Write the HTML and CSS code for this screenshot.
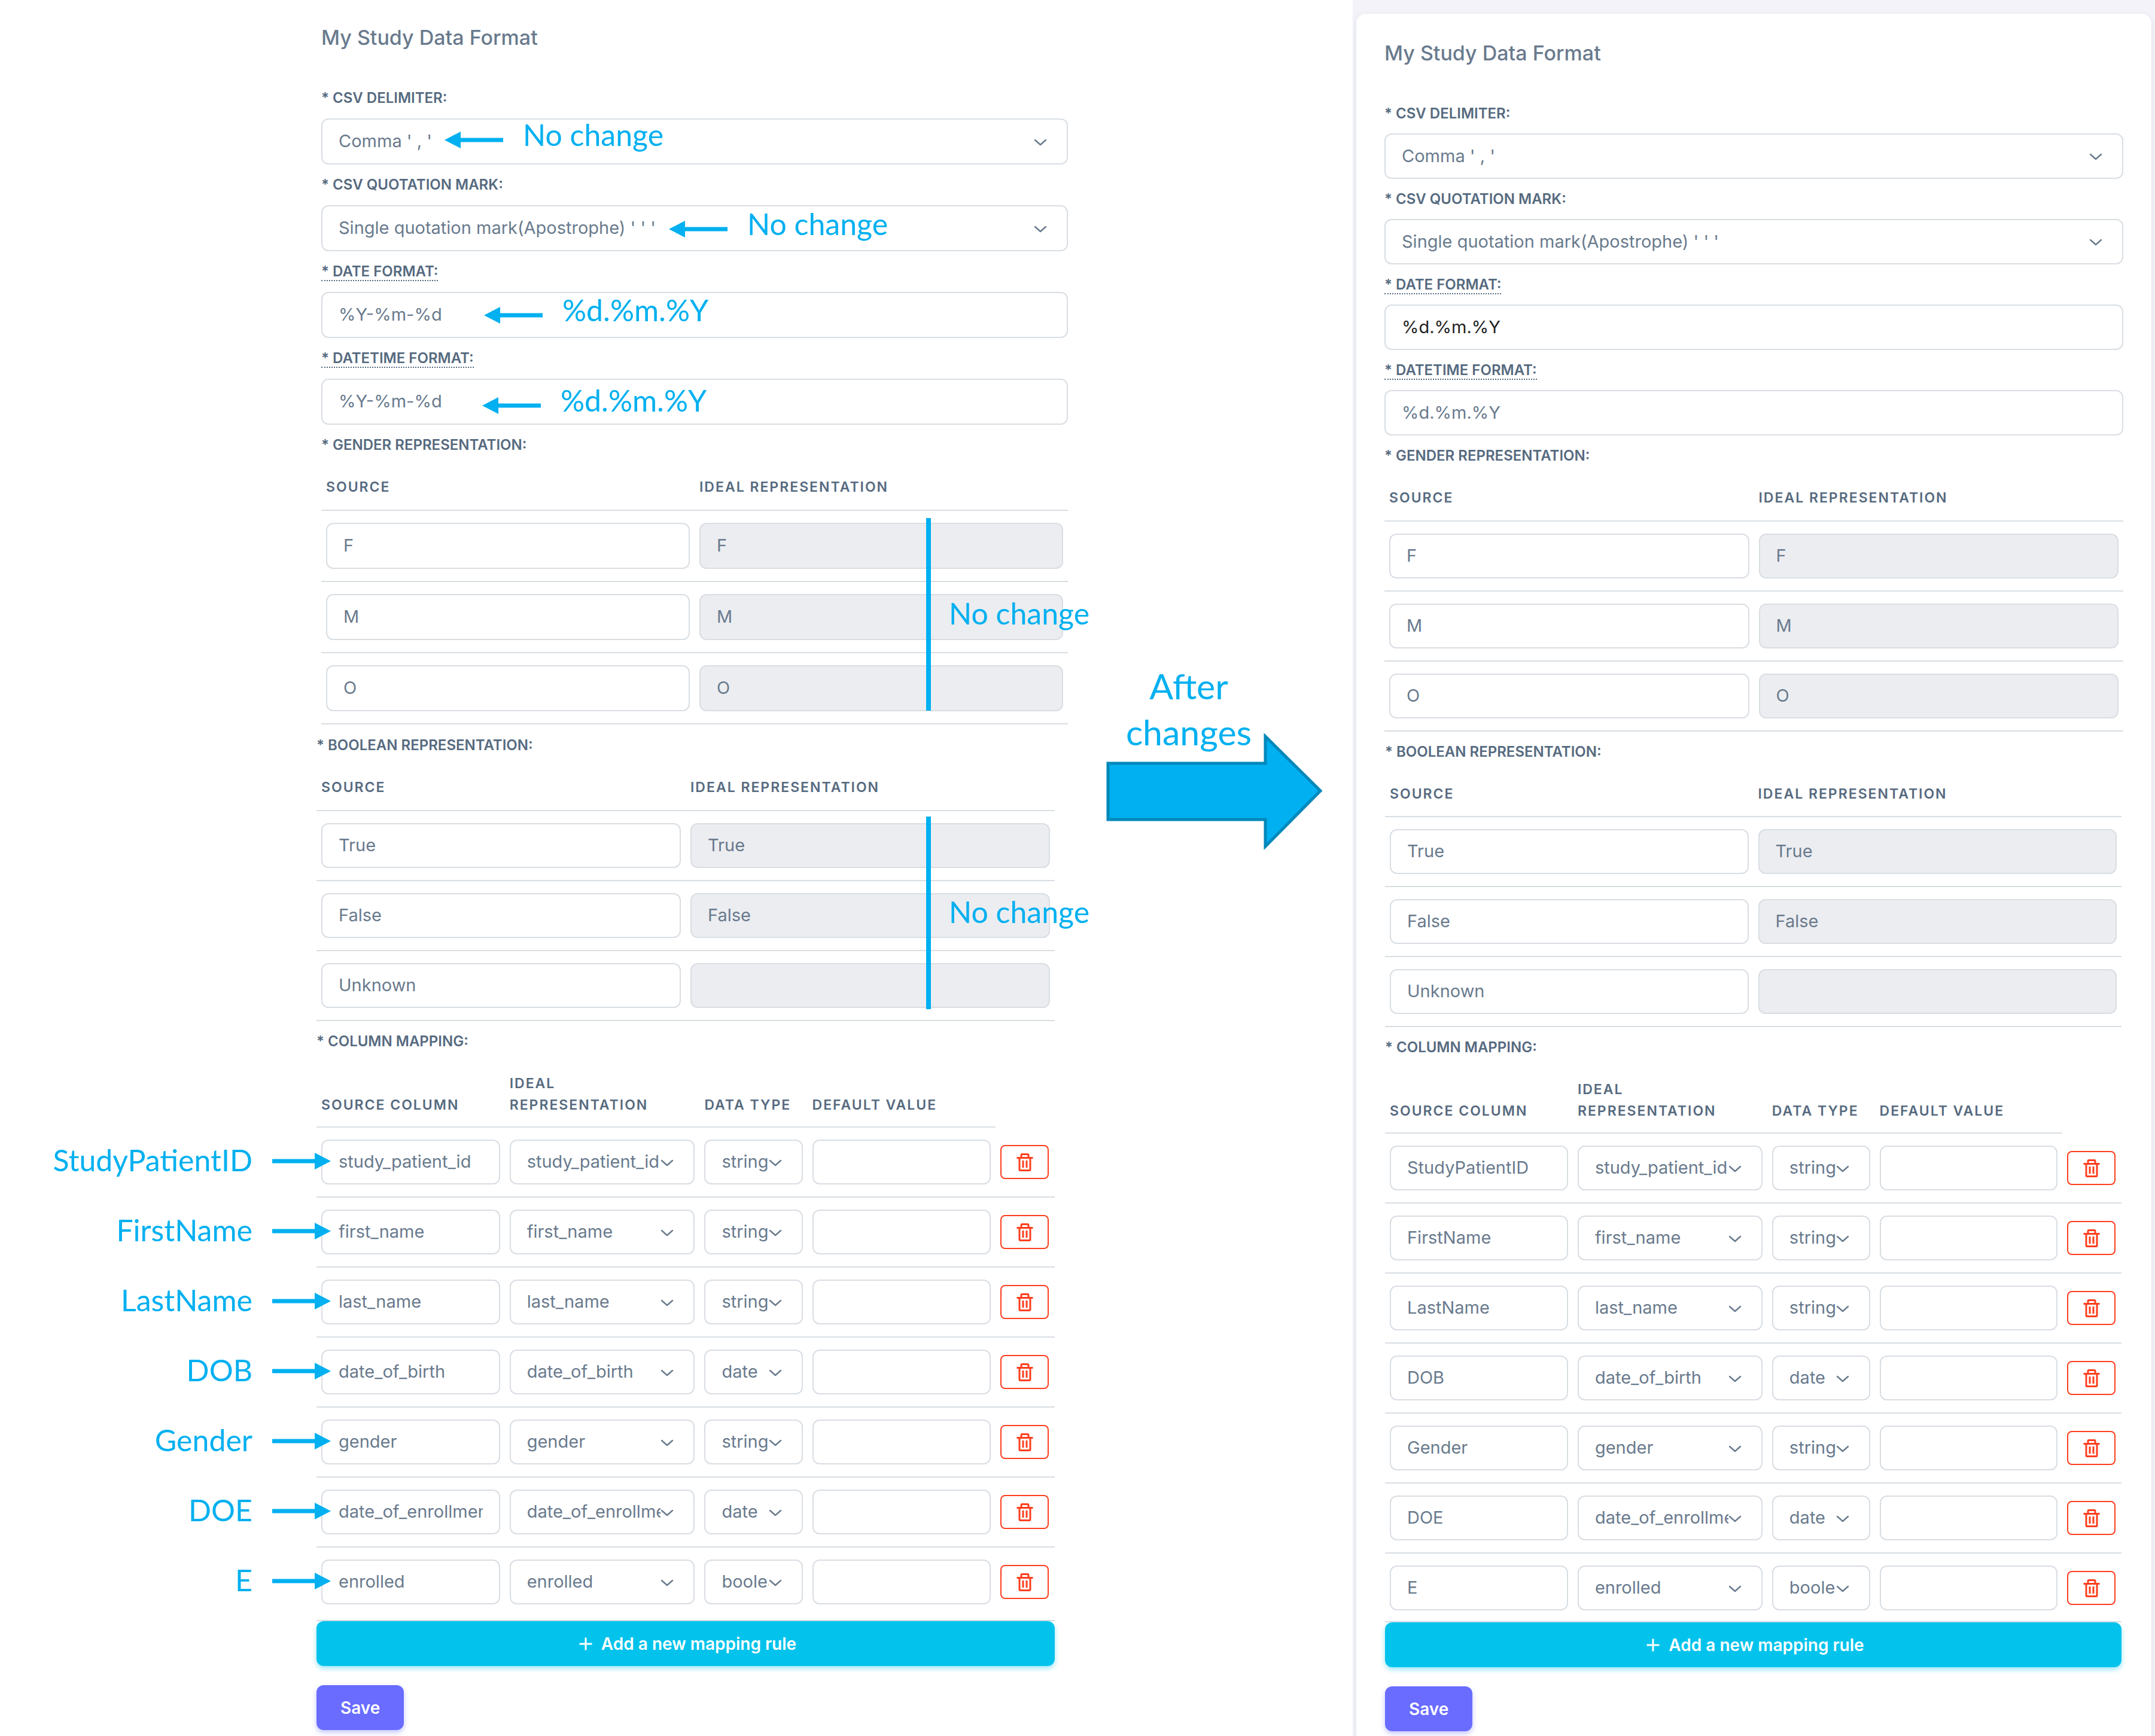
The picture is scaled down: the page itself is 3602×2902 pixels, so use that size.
FILE: index.html
```html
<!DOCTYPE html>
<html lang="en">
<head>
<meta charset="utf-8">
<meta name="viewport" content="width=device-width, initial-scale=1">
<title>My Study Data Format</title>
<link rel="stylesheet" href="styles.css">
</head>
<body>
<svg class="sprite" aria-hidden="true">
  <symbol id="chevron" viewBox="0 0 22 12"><path d="M2 2l9 8 9-8" fill="none" stroke="currentColor" stroke-width="2.4" stroke-linecap="round" stroke-linejoin="round"/></symbol>
  <symbol id="trash" viewBox="0 0 24 24"><path fill="currentColor" fill-rule="evenodd" d="M5 20a2 2 0 0 0 2 2h10a2 2 0 0 0 2-2V8h2V6h-4V4a2 2 0 0 0-2-2H9a2 2 0 0 0-2 2v2H3v2h2zM9 4h6v2H9zM7 8h10v12H7z"/><path fill="currentColor" d="M9 10h2v8H9zm4 0h2v8h-2z"/></symbol>
  <symbol id="plus" viewBox="0 0 24 24"><path fill="currentColor" d="M19 11h-6V5h-2v6H5v2h6v6h2v-6h6z"/></symbol>
  <symbol id="arrow-left" viewBox="0 0 98 28"><path fill="currentColor" d="M0 14L27 0v10.500h71v7H27V28z"/></symbol>
  <symbol id="arrow-right" viewBox="0 0 98 28"><path fill="currentColor" d="M98 14L71 0v10.500H0v7h71V28z"/></symbol>
</svg>
<main class="board">
  <form class="form before">
    <h2 class="title">My Study Data Format</h2>
    <div class="group">
      <label class="label" for="b-delim">* CSV Delimiter:</label>
      <div class="control"><select id="b-delim" class="input select"><option>Comma ' , '</option></select><svg class="chevron"><use href="#chevron"/></svg>
        <span class="note note-delim"><svg class="pointer"><use href="#arrow-left"/></svg><span class="note-text">No change</span></span></div>
      <label class="label" for="b-quote">* CSV Quotation Mark:</label>
      <div class="control"><select id="b-quote" class="input select"><option>Single quotation mark(Apostrophe) ' ' '</option></select><svg class="chevron"><use href="#chevron"/></svg>
        <span class="note note-quote"><svg class="pointer"><use href="#arrow-left"/></svg><span class="note-text">No change</span></span></div>
      <label class="label" for="b-date"><abbr title="Date pattern">* Date Format:</abbr></label>
      <div class="control"><input id="b-date" class="input" value="%Y-%m-%d">
        <span class="note note-date"><svg class="pointer"><use href="#arrow-left"/></svg><span class="note-text">%d.%m.%Y</span></span></div>
      <label class="label" for="b-datetime"><abbr title="Date and time pattern">* Datetime Format:</abbr></label>
      <div class="control"><input id="b-datetime" class="input" value="%Y-%m-%d">
        <span class="note note-datetime"><svg class="pointer"><use href="#arrow-left"/></svg><span class="note-text">%d.%m.%Y</span></span></div>
      <h3 class="label">* Gender Representation:</h3>
      <div class="control">
        <table class="table">
          <thead><tr><th>Source</th><th>Ideal Representation</th></tr></thead>
          <tbody>
            <tr><td><input class="input" aria-label="Source" value="F"></td><td><input class="input" aria-label="Ideal representation" value="F" readonly></td></tr>
            <tr><td><input class="input" aria-label="Source" value="M"></td><td><input class="input" aria-label="Ideal representation" value="M" readonly></td></tr>
            <tr><td><input class="input" aria-label="Source" value="O"></td><td><input class="input" aria-label="Ideal representation" value="O" readonly></td></tr>
          </tbody>
        </table>
        <span class="bracket bracket-gender"><span class="note-text">No change</span></span>
      </div>
    </div>
    <div class="group lower">
      <h3 class="label">* Boolean Representation:</h3>
      <div class="control">
        <table class="table">
          <thead><tr><th>Source</th><th>Ideal Representation</th></tr></thead>
          <tbody>
            <tr><td><input class="input" aria-label="Source" value="True"></td><td><input class="input" aria-label="Ideal representation" value="True" readonly></td></tr>
            <tr><td><input class="input" aria-label="Source" value="False"></td><td><input class="input" aria-label="Ideal representation" value="False" readonly></td></tr>
            <tr><td><input class="input" aria-label="Source" value="Unknown"></td><td><input class="input" aria-label="Ideal representation" value="" readonly></td></tr>
          </tbody>
        </table>
        <span class="bracket bracket-boolean"><span class="note-text">No change</span></span>
      </div>
      <h3 class="label">* Column Mapping:</h3>
      <table class="table mapping">
        <colgroup><col class="c-source"><col class="c-ideal"><col class="c-type"><col class="c-default"><col></colgroup>
        <thead><tr><th>Source Column</th><th>Ideal Representation</th><th>Data Type</th><th>Default Value</th><td></td></tr></thead>
        <tbody>
          <tr>
            <td><div class="control"><input class="input" aria-label="Source column" value="study_patient_id"><span class="note note-row"><span class="note-text">StudyPatientID</span><svg class="pointer"><use href="#arrow-right"/></svg></span></div></td>
            <td><div class="control"><select class="input select" aria-label="Ideal representation"><option>study_patient_id</option></select><svg class="chevron"><use href="#chevron"/></svg></div></td>
            <td><div class="control"><select class="input select" aria-label="Data type"><option>string</option></select><svg class="chevron"><use href="#chevron"/></svg></div></td>
            <td><input class="input" aria-label="Default value"></td>
            <td><button type="button" class="delete" aria-label="Delete rule"><svg class="icon"><use href="#trash"/></svg></button></td>
          </tr>
          <tr>
            <td><div class="control"><input class="input" aria-label="Source column" value="first_name"><span class="note note-row"><span class="note-text">FirstName</span><svg class="pointer"><use href="#arrow-right"/></svg></span></div></td>
            <td><div class="control"><select class="input select" aria-label="Ideal representation"><option>first_name</option></select><svg class="chevron"><use href="#chevron"/></svg></div></td>
            <td><div class="control"><select class="input select" aria-label="Data type"><option>string</option></select><svg class="chevron"><use href="#chevron"/></svg></div></td>
            <td><input class="input" aria-label="Default value"></td>
            <td><button type="button" class="delete" aria-label="Delete rule"><svg class="icon"><use href="#trash"/></svg></button></td>
          </tr>
          <tr>
            <td><div class="control"><input class="input" aria-label="Source column" value="last_name"><span class="note note-row"><span class="note-text">LastName</span><svg class="pointer"><use href="#arrow-right"/></svg></span></div></td>
            <td><div class="control"><select class="input select" aria-label="Ideal representation"><option>last_name</option></select><svg class="chevron"><use href="#chevron"/></svg></div></td>
            <td><div class="control"><select class="input select" aria-label="Data type"><option>string</option></select><svg class="chevron"><use href="#chevron"/></svg></div></td>
            <td><input class="input" aria-label="Default value"></td>
            <td><button type="button" class="delete" aria-label="Delete rule"><svg class="icon"><use href="#trash"/></svg></button></td>
          </tr>
          <tr>
            <td><div class="control"><input class="input" aria-label="Source column" value="date_of_birth"><span class="note note-row"><span class="note-text">DOB</span><svg class="pointer"><use href="#arrow-right"/></svg></span></div></td>
            <td><div class="control"><select class="input select" aria-label="Ideal representation"><option>date_of_birth</option></select><svg class="chevron"><use href="#chevron"/></svg></div></td>
            <td><div class="control"><select class="input select" aria-label="Data type"><option>date</option></select><svg class="chevron"><use href="#chevron"/></svg></div></td>
            <td><input class="input" aria-label="Default value"></td>
            <td><button type="button" class="delete" aria-label="Delete rule"><svg class="icon"><use href="#trash"/></svg></button></td>
          </tr>
          <tr>
            <td><div class="control"><input class="input" aria-label="Source column" value="gender"><span class="note note-row"><span class="note-text">Gender</span><svg class="pointer"><use href="#arrow-right"/></svg></span></div></td>
            <td><div class="control"><select class="input select" aria-label="Ideal representation"><option>gender</option></select><svg class="chevron"><use href="#chevron"/></svg></div></td>
            <td><div class="control"><select class="input select" aria-label="Data type"><option>string</option></select><svg class="chevron"><use href="#chevron"/></svg></div></td>
            <td><input class="input" aria-label="Default value"></td>
            <td><button type="button" class="delete" aria-label="Delete rule"><svg class="icon"><use href="#trash"/></svg></button></td>
          </tr>
          <tr>
            <td><div class="control"><input class="input" aria-label="Source column" value="date_of_enrollment"><span class="note note-row"><span class="note-text">DOE</span><svg class="pointer"><use href="#arrow-right"/></svg></span></div></td>
            <td><div class="control"><select class="input select" aria-label="Ideal representation"><option>date_of_enrollment</option></select><svg class="chevron"><use href="#chevron"/></svg></div></td>
            <td><div class="control"><select class="input select" aria-label="Data type"><option>date</option></select><svg class="chevron"><use href="#chevron"/></svg></div></td>
            <td><input class="input" aria-label="Default value"></td>
            <td><button type="button" class="delete" aria-label="Delete rule"><svg class="icon"><use href="#trash"/></svg></button></td>
          </tr>
          <tr>
            <td><div class="control"><input class="input" aria-label="Source column" value="enrolled"><span class="note note-row"><span class="note-text">E</span><svg class="pointer"><use href="#arrow-right"/></svg></span></div></td>
            <td><div class="control"><select class="input select" aria-label="Ideal representation"><option>enrolled</option></select><svg class="chevron"><use href="#chevron"/></svg></div></td>
            <td><div class="control"><select class="input select" aria-label="Data type"><option>boolean</option></select><svg class="chevron"><use href="#chevron"/></svg></div></td>
            <td><input class="input" aria-label="Default value"></td>
            <td><button type="button" class="delete" aria-label="Delete rule"><svg class="icon"><use href="#trash"/></svg></button></td>
          </tr>
        </tbody>
      </table>
      <button type="button" class="button add"><svg class="icon"><use href="#plus"/></svg>Add a new mapping rule</button>
      <button type="submit" class="button save">Save</button>
    </div>
  </form>

  <div class="transition">
    <p class="transition-text">After<br>changes</p>
    <svg class="transition-arrow" viewBox="0 0 362 200" aria-hidden="true"><path d="M3 53H266V8L358 99 266 192V147H3z" fill="#00b0f0" stroke="#0088bb" stroke-width="5"/></svg>
  </div>

  <div class="pane">
    <form class="form card">
      <h2 class="title">My Study Data Format</h2>
      <div class="group">
        <label class="label" for="a-delim">* CSV Delimiter:</label>
        <div class="control"><select id="a-delim" class="input select"><option>Comma ' , '</option></select><svg class="chevron"><use href="#chevron"/></svg></div>
        <label class="label" for="a-quote">* CSV Quotation Mark:</label>
        <div class="control"><select id="a-quote" class="input select"><option>Single quotation mark(Apostrophe) ' ' '</option></select><svg class="chevron"><use href="#chevron"/></svg></div>
        <label class="label" for="a-date"><abbr title="Date pattern">* Date Format:</abbr></label>
        <div class="control"><input id="a-date" class="input edited" value="%d.%m.%Y"></div>
        <label class="label" for="a-datetime"><abbr title="Date and time pattern">* Datetime Format:</abbr></label>
        <div class="control"><input id="a-datetime" class="input" value="%d.%m.%Y"></div>
        <h3 class="label">* Gender Representation:</h3>
        <table class="table">
          <thead><tr><th>Source</th><th>Ideal Representation</th></tr></thead>
          <tbody>
            <tr><td><input class="input" aria-label="Source" value="F"></td><td><input class="input" aria-label="Ideal representation" value="F" readonly></td></tr>
            <tr><td><input class="input" aria-label="Source" value="M"></td><td><input class="input" aria-label="Ideal representation" value="M" readonly></td></tr>
            <tr><td><input class="input" aria-label="Source" value="O"></td><td><input class="input" aria-label="Ideal representation" value="O" readonly></td></tr>
          </tbody>
        </table>
      </div>
      <div class="group lower">
        <h3 class="label">* Boolean Representation:</h3>
        <table class="table">
          <thead><tr><th>Source</th><th>Ideal Representation</th></tr></thead>
          <tbody>
            <tr><td><input class="input" aria-label="Source" value="True"></td><td><input class="input" aria-label="Ideal representation" value="True" readonly></td></tr>
            <tr><td><input class="input" aria-label="Source" value="False"></td><td><input class="input" aria-label="Ideal representation" value="False" readonly></td></tr>
            <tr><td><input class="input" aria-label="Source" value="Unknown"></td><td><input class="input" aria-label="Ideal representation" value="" readonly></td></tr>
          </tbody>
        </table>
        <h3 class="label">* Column Mapping:</h3>
        <table class="table mapping">
          <colgroup><col class="c-source"><col class="c-ideal"><col class="c-type"><col class="c-default"><col></colgroup>
          <thead><tr><th>Source Column</th><th>Ideal Representation</th><th>Data Type</th><th>Default Value</th><td></td></tr></thead>
          <tbody>
            <tr>
              <td><input class="input" aria-label="Source column" value="StudyPatientID"></td>
              <td><div class="control"><select class="input select" aria-label="Ideal representation"><option>study_patient_id</option></select><svg class="chevron"><use href="#chevron"/></svg></div></td>
              <td><div class="control"><select class="input select" aria-label="Data type"><option>string</option></select><svg class="chevron"><use href="#chevron"/></svg></div></td>
              <td><input class="input" aria-label="Default value"></td>
              <td><button type="button" class="delete" aria-label="Delete rule"><svg class="icon"><use href="#trash"/></svg></button></td>
            </tr>
            <tr>
              <td><input class="input" aria-label="Source column" value="FirstName"></td>
              <td><div class="control"><select class="input select" aria-label="Ideal representation"><option>first_name</option></select><svg class="chevron"><use href="#chevron"/></svg></div></td>
              <td><div class="control"><select class="input select" aria-label="Data type"><option>string</option></select><svg class="chevron"><use href="#chevron"/></svg></div></td>
              <td><input class="input" aria-label="Default value"></td>
              <td><button type="button" class="delete" aria-label="Delete rule"><svg class="icon"><use href="#trash"/></svg></button></td>
            </tr>
            <tr>
              <td><input class="input" aria-label="Source column" value="LastName"></td>
              <td><div class="control"><select class="input select" aria-label="Ideal representation"><option>last_name</option></select><svg class="chevron"><use href="#chevron"/></svg></div></td>
              <td><div class="control"><select class="input select" aria-label="Data type"><option>string</option></select><svg class="chevron"><use href="#chevron"/></svg></div></td>
              <td><input class="input" aria-label="Default value"></td>
              <td><button type="button" class="delete" aria-label="Delete rule"><svg class="icon"><use href="#trash"/></svg></button></td>
            </tr>
            <tr>
              <td><input class="input" aria-label="Source column" value="DOB"></td>
              <td><div class="control"><select class="input select" aria-label="Ideal representation"><option>date_of_birth</option></select><svg class="chevron"><use href="#chevron"/></svg></div></td>
              <td><div class="control"><select class="input select" aria-label="Data type"><option>date</option></select><svg class="chevron"><use href="#chevron"/></svg></div></td>
              <td><input class="input" aria-label="Default value"></td>
              <td><button type="button" class="delete" aria-label="Delete rule"><svg class="icon"><use href="#trash"/></svg></button></td>
            </tr>
            <tr>
              <td><input class="input" aria-label="Source column" value="Gender"></td>
              <td><div class="control"><select class="input select" aria-label="Ideal representation"><option>gender</option></select><svg class="chevron"><use href="#chevron"/></svg></div></td>
              <td><div class="control"><select class="input select" aria-label="Data type"><option>string</option></select><svg class="chevron"><use href="#chevron"/></svg></div></td>
              <td><input class="input" aria-label="Default value"></td>
              <td><button type="button" class="delete" aria-label="Delete rule"><svg class="icon"><use href="#trash"/></svg></button></td>
            </tr>
            <tr>
              <td><input class="input" aria-label="Source column" value="DOE"></td>
              <td><div class="control"><select class="input select" aria-label="Ideal representation"><option>date_of_enrollment</option></select><svg class="chevron"><use href="#chevron"/></svg></div></td>
              <td><div class="control"><select class="input select" aria-label="Data type"><option>date</option></select><svg class="chevron"><use href="#chevron"/></svg></div></td>
              <td><input class="input" aria-label="Default value"></td>
              <td><button type="button" class="delete" aria-label="Delete rule"><svg class="icon"><use href="#trash"/></svg></button></td>
            </tr>
            <tr>
              <td><input class="input" aria-label="Source column" value="E"></td>
              <td><div class="control"><select class="input select" aria-label="Ideal representation"><option>enrolled</option></select><svg class="chevron"><use href="#chevron"/></svg></div></td>
              <td><div class="control"><select class="input select" aria-label="Data type"><option>boolean</option></select><svg class="chevron"><use href="#chevron"/></svg></div></td>
              <td><input class="input" aria-label="Default value"></td>
              <td><button type="button" class="delete" aria-label="Delete rule"><svg class="icon"><use href="#trash"/></svg></button></td>
            </tr>
          </tbody>
        </table>
        <button type="button" class="button add"><svg class="icon"><use href="#plus"/></svg>Add a new mapping rule</button>
        <button type="submit" class="button save">Save</button>
      </div>
    </form>
  </div>
</main>
</body>
</html>
```
FILE: styles.css
```css
*,
*::before,
*::after {
  box-sizing: border-box;
}

:root {
  --text: #697a8d;
  --heading: #566a7f;
  --line: #d9dee3;
  --note: #00b0f0;
}

body {
  margin: 0;
  background: #fff;
  color: var(--text);
  font-family: Inter, "Liberation Sans", sans-serif;
  font-size: 29px;
}

.sprite {
  display: none;
}

.board {
  display: grid;
  grid-template-columns: 529fr 1256fr 476fr 1341fr;
}

/* Forms */
.form {
  --field: 77px;
  --label-gap: 16px;
  --head-pad: 20px;
  --last-pad: 26px;
}

.before {
  grid-column: 2;
  padding: 41px 0 10px;
}

.before > .group,
.before > .title {
  padding-left: 8px;
}

.before > .lower {
  padding: 0 22px 0 0;
}

.pane {
  background: #f3f3f9;
  padding: 23px 6px 0;
  overflow: hidden;
}

.card {
  --field: 76px;
  --label-gap: 15px;
  --last-pad: 18px;
  min-height: 100%;
  padding: 44px 47px 8px;
  background: #fff;
  border-radius: 16px 16px 0 0;
  box-shadow: 0 4px 12px rgba(67, 89, 113, 0.12);
}

.card > .lower {
  --head-pad: 19px;
  padding: 0 3px 0 1px;
}

.title {
  margin: 0 0 60px;
  color: var(--text);
  font-size: 34px;
  font-weight: 500;
  line-height: 44px;
}

.label {
  display: block;
  margin: 15px 0 0;
  padding-top: 1px;
  color: var(--heading);
  font-size: 24px;
  font-weight: 600;
  line-height: 36px;
  text-transform: uppercase;
}

.label:first-child {
  margin-top: 0;
}

.lower > .label:first-child {
  margin-top: 16px;
}

.card > .lower > .label:first-child {
  margin-top: 15px;
}

.label + .control:has(> .input) {
  margin-top: var(--label-gap);
}

abbr {
  text-decoration: none;
  border-bottom: 2px dotted currentColor;
}

.control {
  position: relative;
}

.input {
  display: block;
  width: 100%;
  height: var(--field);
  margin: 0;
  padding: 0 27px 2px;
  border: 2px solid var(--line);
  border-radius: 12px;
  background: #fff;
  color: var(--text);
  font: inherit;
}

.input[readonly] {
  background: #ecedf1;
}

.edited {
  color: #222;
}

.select {
  appearance: none;
  padding-right: 55px;
}

.chevron {
  position: absolute;
  top: calc(50% - 5px);
  right: 35px;
  width: 22px;
  height: 12px;
  color: var(--text);
  pointer-events: none;
}

/* Tables */
.table {
  width: 100%;
  border-collapse: separate;
  border-spacing: 0;
  table-layout: fixed;
}

.c-source,
.c-default {
  width: 25.5%;
}

.c-ideal {
  width: 26.4%;
}

.c-type {
  width: 14.6%;
}

th {
  padding: 34px 8px var(--head-pad);
  border-bottom: 2px solid var(--line);
  color: var(--heading);
  font-size: 23px;
  font-weight: 600;
  letter-spacing: 2px;
  line-height: 36px;
  text-align: left;
  text-transform: uppercase;
  vertical-align: bottom;
}

tbody td {
  padding: 20px 8px;
  border-bottom: 2px solid var(--line);
}

.card .table,
.lower .table {
  --field: 75px;
}

.mapping {
  --head-pad: 18px;
}

.mapping tbody td:last-child {
  padding-right: 10px;
}

.mapping tbody tr:last-child td {
  padding-bottom: var(--last-pad);
}

/* Buttons */
.delete {
  display: flex;
  align-items: center;
  justify-content: center;
  width: 100%;
  height: 57px;
  padding: 0;
  border: 2px solid #ff3e1d;
  border-radius: 8px;
  background: none;
  color: #ff3e1d;
}

.icon {
  width: 36px;
  height: 36px;
}

.button {
  display: flex;
  align-items: center;
  justify-content: center;
  gap: 8px;
  height: 75px;
  padding: 0 40px;
  border: 0;
  border-radius: 12px;
  color: #fff;
  font: inherit;
  font-size: 28px;
  font-weight: 600;
}

.add {
  width: 100%;
  background: #03c3ec;
  box-shadow: 0 4px 8px rgba(3, 195, 236, 0.4);
}

.save {
  margin-top: 32px;
  background: #696cff;
  box-shadow: 0 4px 8px rgba(105, 108, 255, 0.4);
}

/* Annotations over the form */
.note {
  position: absolute;
  z-index: 1;
  display: flex;
  align-items: center;
  gap: 33px;
  height: 76px;
  pointer-events: none;
}

.note-text {
  color: var(--note);
  font-family: Lato, "Liberation Sans", sans-serif;
  font-size: 50px;
  line-height: 60px;
  white-space: nowrap;
}

.pointer {
  flex: none;
  width: 98px;
  height: 28px;
  color: var(--note);
}

.control > .note:not(.note-row) .note-text {
  padding-bottom: 18px;
}

.note-delim {
  top: -2px;
  left: 206px;
}

.note-quote {
  top: 2px;
  left: 581px;
}

.note-date {
  top: 1px;
  left: 272px;
}

.note-datetime {
  top: 7px;
  left: 269px;
}

.note-row {
  top: -2px;
  right: calc(100% - 16px);
}

.note-row .note-text {
  padding-bottom: 4px;
}

.bracket {
  position: absolute;
  z-index: 1;
  display: flex;
  align-items: center;
  height: 322px;
  padding: 0 0 4px 30px;
  border-left: 8px solid var(--note);
  pointer-events: none;
}

.bracket-gender {
  top: 104px;
  left: 1011px;
}

.bracket-boolean {
  top: 101px;
  left: 1019px;
}

.transition {
  padding: 1108px 0 0 64px;
}

.transition-text {
  width: 276px;
  margin: 0 0 -39px;
  color: var(--note);
  font-family: Lato, "Liberation Sans", sans-serif;
  font-size: 59px;
  line-height: 77px;
  text-align: center;
}

.transition-arrow {
  display: block;
  width: 362px;
  height: 200px;
}
```
